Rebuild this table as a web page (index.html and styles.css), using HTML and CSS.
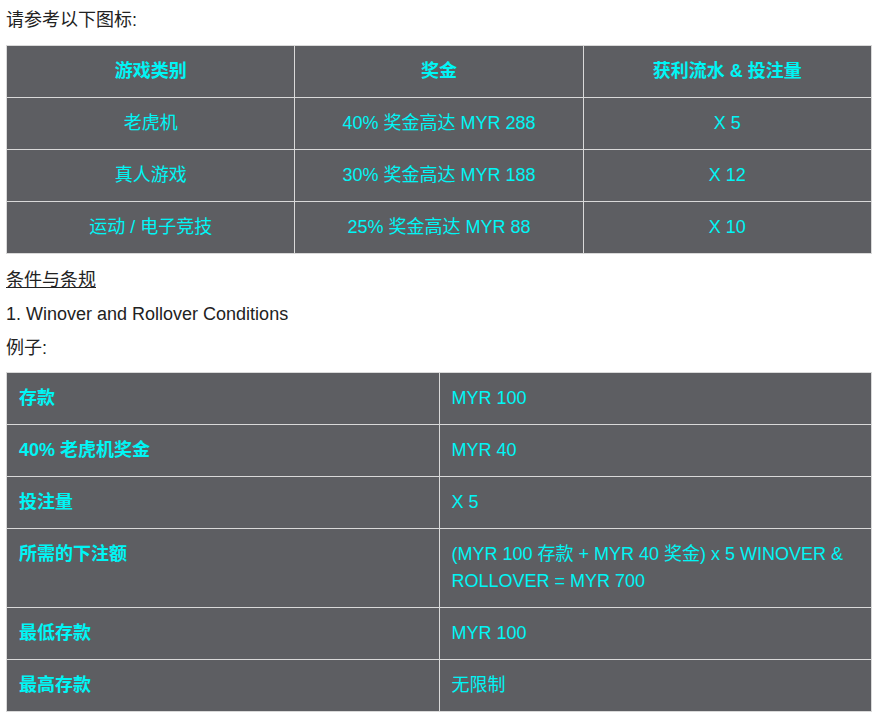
FILE: index.html
```html
<!DOCTYPE html>
<html lang="zh">
<head>
<meta charset="utf-8">
<link rel="stylesheet" href="styles.css">
</head>
<body>
<p class="intro">请参考以下图标:</p>
<table class="grid grid-3">
  <thead>
    <tr><th>游戏类别</th><th>奖金</th><th>获利流水 &amp; 投注量</th></tr>
  </thead>
  <tbody>
    <tr><td>老虎机</td><td>40% 奖金高达 MYR 288</td><td>X 5</td></tr>
    <tr><td>真人游戏</td><td>30% 奖金高达 MYR 188</td><td>X 12</td></tr>
    <tr><td>运动 / 电子竞技</td><td>25% 奖金高达 MYR 88</td><td>X 10</td></tr>
  </tbody>
</table>
<p class="terms"><u>条件与条规</u></p>
<p class="line">1. Winover and Rollover Conditions</p>
<p class="line last">例子:</p>
<table class="grid grid-2">
  <colgroup><col class="half"><col class="half"></colgroup>
  <tbody>
    <tr><th>存款</th><td>MYR 100</td></tr>
    <tr><th>40% 老虎机奖金</th><td>MYR 40</td></tr>
    <tr><th>投注量</th><td>X 5</td></tr>
    <tr><th>所需的下注额</th><td>(MYR 100 存款 + MYR 40 奖金) x 5 WINOVER &amp; ROLLOVER = MYR 700</td></tr>
    <tr><th>最低存款</th><td>MYR 100</td></tr>
    <tr><th>最高存款</th><td>无限制</td></tr>
  </tbody>
</table>
</body>
</html>
```
FILE: styles.css
```css
html, body {
  background: #fff;
}
body {
  margin: 7px 6px;
  font-family: "Liberation Sans", "Noto Sans CJK SC", sans-serif;
  font-size: 18px;
  color: #222;
}
p {
  margin: 0;
  line-height: 27px;
}
.intro {
  margin-bottom: 11px;
}
.terms {
  margin-top: 13px;
  margin-bottom: 7px;
}
.line {
  margin-bottom: 7px;
}
.line.last {
  margin-bottom: 10px;
}
.grid {
  width: 100%;
  border-collapse: collapse;
  table-layout: fixed;
  background: #5d5e62;
  color: #00f5f5;
  font-size: 18px;
  line-height: 27px;
}
.grid th,
.grid td {
  border: 1px solid #d9d9d9;
  padding: 12px 12px;
}
.grid-3 th,
.grid-3 td {
  text-align: center;
}
.grid-3 th {
  font-weight: bold;
}
.grid-3 td {
  font-weight: normal;
}
.half {
  width: 50%;
}
.grid-2 th {
  text-align: left;
  font-weight: bold;
  vertical-align: top;
}
.grid-2 td {
  text-align: left;
  vertical-align: top;
}
```
